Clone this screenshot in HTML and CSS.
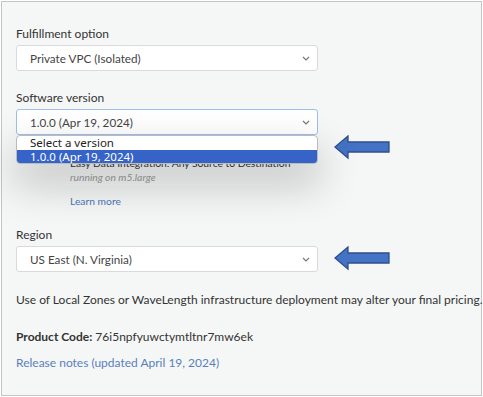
FILE: index.html
```html
<!DOCTYPE html>
<html>
<head>
<meta charset="utf-8">
<link rel="stylesheet" href="styles.css">
</head>
<body>
<div class="frame">
  <div class="field">
    <div class="label">Fulfillment option</div>
    <div class="select"><span>Private VPC (Isolated)</span><svg class="chev" width="8" height="5" viewBox="0 0 8 5"><path d="M1 1 L4 4 L7 1" fill="none" stroke="#777" stroke-width="1.2"/></svg></div>
  </div>
  <div class="field">
    <div class="label">Software version</div>
    <div class="select-wrap">
      <div class="select focus"><span>1.0.0 (Apr 19, 2024)</span><svg class="chev" width="8" height="5" viewBox="0 0 8 5"><path d="M1 1 L4 4 L7 1" fill="none" stroke="#777" stroke-width="1.2"/></svg></div>
      <div class="listbox">
        <div class="opt">Select a version</div>
        <div class="opt sel">1.0.0 (Apr 19, 2024)</div>
      </div>
      <svg class="arrow arrow1" width="58" height="26" viewBox="0 0 58 26"><path d="M1 12 L14 1 L14 7 L55 7 L55 17 L14 17 L14 23 Z" fill="#4472c4" stroke="#2f4f8a" stroke-width="1.3" stroke-linejoin="miter"/></svg>
    </div>
    <div class="desc">
      <div class="desc-title">Easy Data Integration: Any Source to Destination</div>
      <div class="desc-sub">running on m5.large</div>
      <a class="learn">Learn more</a>
    </div>
  </div>
  <div class="field">
    <div class="label">Region</div>
    <div class="select-wrap">
      <div class="select"><span>US East (N. Virginia)</span><svg class="chev" width="8" height="5" viewBox="0 0 8 5"><path d="M1 1 L4 4 L7 1" fill="none" stroke="#777" stroke-width="1.2"/></svg></div>
      <svg class="arrow arrow2" width="58" height="26" viewBox="0 0 58 26"><path d="M1 12 L14 1 L14 7 L55 7 L55 17 L14 17 L14 23 Z" fill="#4472c4" stroke="#2f4f8a" stroke-width="1.3" stroke-linejoin="miter"/></svg>
    </div>
  </div>
  <p class="note">Use of Local Zones or WaveLength infrastructure deployment may alter your final pricing.</p>
  <p class="code"><b>Product Code:</b> 76i5npfyuwctymtltnr7mw6ek</p>
  <a class="release">Release notes (updated April 19, 2024)</a>
</div>
</body>
</html>
```
FILE: styles.css
```css
html, body { margin: 0; padding: 0; background: #ffffff; }
body { font-family: Lato, "Noto Sans", Arial, sans-serif; }
.frame {
  margin: 1px;
  height: 395px;
  box-sizing: border-box;
  border: 1px solid #c4c4c4;
  background: #f5f7f7;
  padding: 24px 0 0 14px;
  color: #333;
  font-size: 12px;
}
.field { display: flex; flex-direction: column; }
.label { line-height: 16px; height: 16px; color: #333; font-size: 12px; }
.select {
  margin-top: 3px;
  width: 302px;
  height: 26px;
  box-sizing: border-box;
  background: #fff;
  border: 1px solid #dadada;
  border-radius: 3px;
  display: flex;
  align-items: center;
  justify-content: space-between;
  padding: 0 6px 0 13px;
  color: #444;
  font-size: 11.7px;
}
.select.focus { border-color: #9dc0ea; }
.chev { margin-right: 1px; }
.field + .field { margin-top: 19px; }
.select-wrap { position: relative; }
.listbox {
  position: absolute;
  left: 0;
  top: 29px;
  width: 302px;
  background: #fff;
  border: 1px solid #bbb;
  border-radius: 4px;
  box-sizing: border-box;
  overflow: hidden;
  box-shadow: 0 18px 40px 4px rgba(0,0,0,0.2);
  z-index: 2;
  font-family: "Noto Sans", "Open Sans", sans-serif;
  font-size: 11.5px;
  color: #222;
}
.opt { height: 13.5px; line-height: 13.5px; padding-left: 13px; }
.opt.sel { background: #3563c7; color: #fff; }
.arrow { position: absolute; }
.arrow1 { left: 318px; top: 29px; }
.arrow2 { left: 318px; top: 3px; }
.desc { padding-left: 54px; margin-top: 21px; display: flex; flex-direction: column; }
.desc-title { line-height: 14px; color: #333; font-size: 10.3px; }
.desc-sub { line-height: 14px; color: #999; font-style: italic; font-size: 10.3px; }
.learn { margin-top: 10px; line-height: 14px; color: #4a76b9; font-size: 10.3px; }
.note { margin: 20px 0 0; line-height: 16px; color: #333; font-size: 12px; white-space: nowrap; }
.code { margin: 21px 0 0; line-height: 16px; color: #333; font-size: 12px; }
.code b { color: #333; }
.release { display: block; margin-top: 10px; line-height: 16px; color: #5a80bb; font-size: 12px; }
```
